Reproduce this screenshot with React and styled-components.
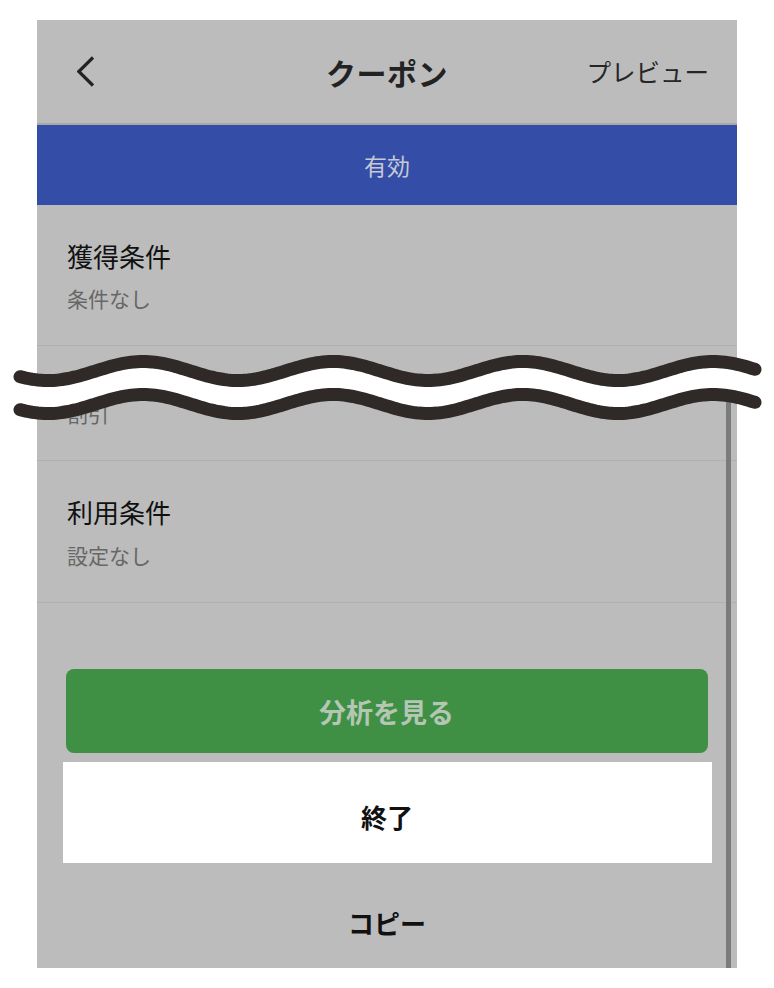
import React from "react";
import styled, { createGlobalStyle } from "styled-components";

const GlobalStyle = createGlobalStyle`
  html, body {
    margin: 0;
    padding: 0;
    background: #ffffff;
  }
  body {
    font-family: "Noto Sans CJK JP", "Noto Sans", sans-serif;
  }
`;

const Page = styled.div`
  position: relative;
  width: 774px;
  height: 988px;
  padding: 20px 37px;
  box-sizing: border-box;
`;

const Screen = styled.div`
  position: relative;
  width: 700px;
  height: 948px;
  background: #bcbcbc;
  overflow: hidden;
`;

const Header = styled.div`
  height: 103px;
  border-bottom: 2px solid #a8a8a8;
  display: grid;
  grid-template-columns: 1fr auto 1fr;
  align-items: center;
  padding: 0 28px;
`;

const BackButton = styled.div`
  display: flex;
  align-items: center;
  height: 32px;
  padding-left: 12px;
`;

const Title = styled.div`
  font-size: 30px;
  font-weight: 700;
  color: #222;
  letter-spacing: 0.5px;
`;

const HeaderAction = styled.div`
  justify-self: end;
  font-size: 24.5px;
  color: #262626;
`;

const StatusBand = styled.div`
  height: 80px;
  background: #344ea7;
  color: #c6c9d6;
  font-size: 23px;
  display: flex;
  align-items: center;
  justify-content: center;
`;

const Row = styled.div`
  display: flex;
  flex-direction: column;
  padding: ${(p) => (p.$short ? "52px" : "33px")} 30px 32px;
  border-bottom: 1px solid #b0b0b0;
`;

const RowTitle = styled.div`
  font-size: 26px;
  line-height: 36px;
  color: #111;
  margin-bottom: ${(p) => p.$gap}px;
`;

const RowValue = styled.div`
  font-size: 21px;
  line-height: 30px;
  color: #676767;
`;

const Actions = styled.div`
  display: flex;
  flex-direction: column;
  align-items: center;
  padding-top: 66px;
`;

const PrimaryButton = styled.div`
  flex-shrink: 0;
  width: 642px;
  height: 84px;
  margin-left: -1px;
  border-radius: 8px;
  background: #3f9045;
  color: #b4c6b4;
  font-size: 27px;
  font-weight: 700;
  display: flex;
  align-items: center;
  justify-content: center;
`;

const PlainButton = styled.div`
  flex-shrink: 0;
  box-sizing: border-box;
  width: ${(p) => p.$width}px;
  height: ${(p) => p.$height}px;
  margin-top: ${(p) => p.$top}px;
  padding-top: ${(p) => p.$shift || 0}px;
  background: ${(p) => p.$bg || "transparent"};
  color: #111;
  font-size: 26px;
  font-weight: 700;
  display: flex;
  align-items: center;
  justify-content: center;
`;

const Scrollbar = styled.div`
  position: absolute;
  right: 6px;
  top: 375px;
  bottom: 0;
  width: 5px;
  background: #7b7b7b;
`;

const BreakMark = styled.svg`
  position: absolute;
  left: 0;
  top: 340px;
  width: 774px;
  height: 90px;
  pointer-events: none;
`;

const AMP = 9.5;

function wave(offset) {
  const pts = [];
  const start = 20;
  const end = 755;
  const y = (x) => 371 + offset + AMP * Math.cos((2 * Math.PI * (x - 48)) / 190);
  for (let x = start; x < end; x += 3) {
    pts.push([x, y(x)]);
  }
  pts.push([end, y(end)]);
  return pts;
}

function toPath(pts) {
  return pts
    .map((p, i) => (i === 0 ? "M" : "L") + p[0].toFixed(1) + " " + p[1].toFixed(1))
    .join(" ");
}

function WaveBreak() {
  const top = wave(0);
  const bottom = wave(33);
  const fill =
    toPath(top) +
    " " +
    bottom
      .slice()
      .reverse()
      .map((p) => "L" + p[0].toFixed(1) + " " + p[1].toFixed(1))
      .join(" ") +
    " Z";
  return (
    <BreakMark viewBox="0 340 774 90">
      <path d={fill} fill="#ffffff" />
      <path d={toPath(top)} fill="none" stroke="#2f2a28" strokeWidth="13" strokeLinecap="round" />
      <path d={toPath(bottom)} fill="none" stroke="#2f2a28" strokeWidth="13" strokeLinecap="round" />
    </BreakMark>
  );
}

function Chevron() {
  return (
    <svg width="20" height="32" viewBox="0 0 20 32">
      <path d="M16 1.5 L1.8 15.5 L16 29.5" fill="none" stroke="#222" strokeWidth="3.2" />
    </svg>
  );
}

export default function App() {
  return (
    <>
      <GlobalStyle />
      <Page>
        <Screen>
          <Header>
            <BackButton>
              <Chevron />
            </BackButton>
            <Title>クーポン</Title>
            <HeaderAction>プレビュー</HeaderAction>
          </Header>
          <StatusBand>有効</StatusBand>
          <Row>
            <RowTitle $gap={9}>獲得条件</RowTitle>
            <RowValue>条件なし</RowValue>
          </Row>
          <Row $short>
            <RowValue>割引</RowValue>
          </Row>
          <Row>
            <RowTitle $gap={10}>利用条件</RowTitle>
            <RowValue>設定なし</RowValue>
          </Row>
          <Actions>
            <PrimaryButton>分析を見る</PrimaryButton>
            <PlainButton $width={649} $height={101} $top={9} $shift={8} $bg="#ffffff">
              終了
            </PlainButton>
            <PlainButton $width={649} $height={100} $top={9}>
              コピー
            </PlainButton>
          </Actions>
          <Scrollbar />
        </Screen>
        <WaveBreak />
      </Page>
    </>
  );
}
